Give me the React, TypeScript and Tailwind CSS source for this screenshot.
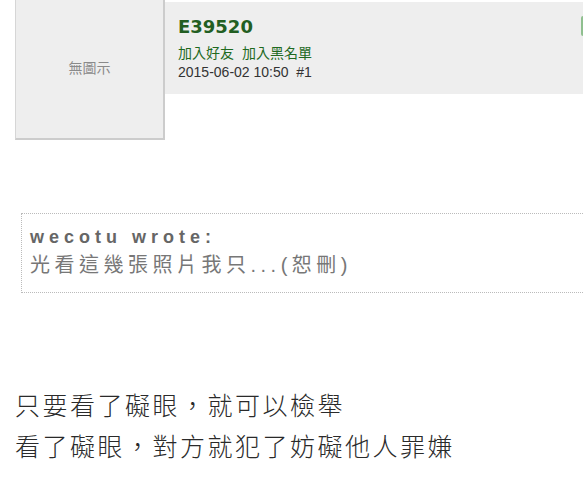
export default function App() {
  return (
    <div className="w-[583px] h-[491px] overflow-hidden bg-white relative font-['Liberation_Sans','Noto_Sans_CJK_TC',sans-serif]">
      {/* post header */}
      <div className="flex">
        <div className="ml-[15px] w-[150px] h-[140px] shrink-0 bg-[#eeeeee] border-l border-l-[#d6d6d6] border-r-2 border-b-2 border-r-[#cccccc] border-b-[#cccccc] text-center pt-[56px]">
          <span className="text-[14px] leading-[20px] text-[#8a8a8a]">無圖示</span>
        </div>
        <div className="mt-[2px] h-[92px] flex-1 bg-[#eeeeee] pl-[13px] pt-[13px] relative">
          <div className="font-['DejaVu_Sans',sans-serif] font-bold text-[18px] leading-[24px] text-[#225e22]">E39520</div>
          <div className="mt-[5px] text-[14px] leading-[18px] text-[#1f6a1f] flex gap-[8px]">
            <a>加入好友</a>
            <a>加入黑名單</a>
          </div>
          <div className="mt-[1px] text-[14px] leading-[18px] text-[#333333]">2015-06-02 10:50&nbsp; #1</div>
          <div className="absolute right-[-8px] top-[14px] w-[10px] h-[20px] bg-[#8fbf8f] rounded-[2px]" />
        </div>
      </div>

      {/* quote */}
      <div className="ml-[21px] mt-[73px] w-[600px] h-[80px] border border-dotted border-[#bbbbbb] pl-[8px] pt-[11px]">
        <div className="font-bold text-[18px] leading-[24px] tracking-[5px] text-[#666666]">wecotu wrote:</div>
        <div className="mt-[3px] text-[20px] leading-[26px] tracking-[4.5px] text-[#777777]">光看這幾張照片我只...(恕刪)</div>
      </div>

      {/* body */}
      <div className="ml-[15px] mt-[91px] text-[25px] leading-[41px] tracking-[2.5px] text-[#2a2a2a] font-['Noto_Sans_CJK_TC',sans-serif] font-light">
        <div>只要看了礙眼，就可以檢舉</div>
        <div>看了礙眼，對方就犯了妨礙他人罪嫌</div>
      </div>
    </div>
  );
}
